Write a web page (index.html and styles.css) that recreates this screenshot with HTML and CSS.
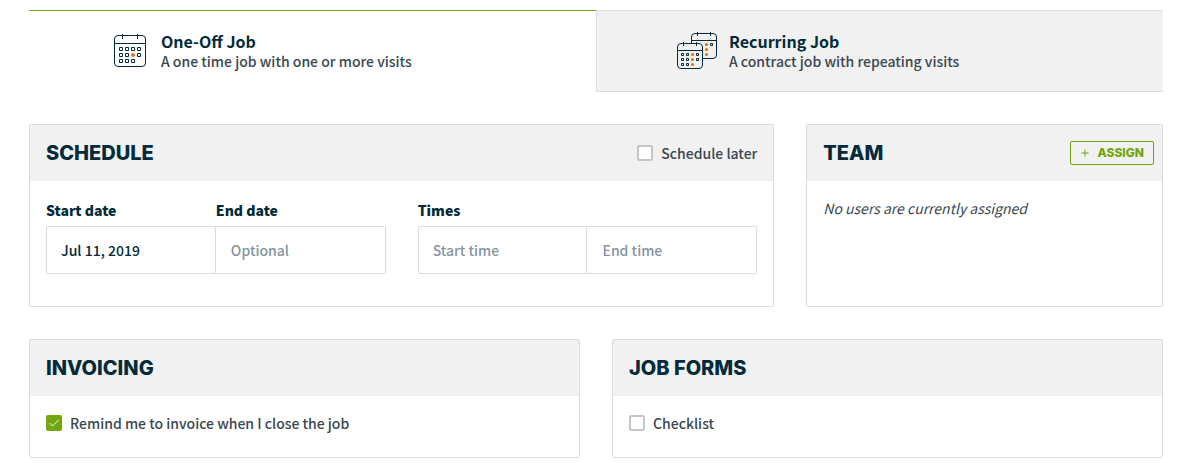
FILE: index.html
```html
<!DOCTYPE html>
<html lang="en">
<head>
    <meta charset="UTF-8">
    <meta name="viewport" content="width=device-width, initial-scale=1.0">
    <title>New Job</title>
    <link rel="stylesheet" href="styles.css">
</head>
<body>
    <div class="tabs" role="tablist">
        <button type="button" class="tab active" role="tab" aria-selected="true">
            <svg class="tab-icon" viewBox="0 0 40 40" aria-hidden="true">
                <rect x="5.5" y="4.5" width="31" height="31" rx="3.5"/>
                <path d="M5 12.5h32M13.5 3v5M28.5 3v5"/>
                <path d="M10.5 16.5h3v3h-3zM16.5 16.5h3v3h-3zM22.5 16.5h3v3h-3zM28.5 16.5h3v3h-3z"/>
                <path d="M10.5 22.5h3v3h-3zM16.5 22.5h3v3h-3zM28.5 22.5h3v3h-3z"/>
                <path d="M10.5 28.5h3v3h-3zM16.5 28.5h3v3h-3zM22.5 28.5h3v3h-3z"/>
                <circle class="dot" cx="24" cy="24" r="2"/>
            </svg>
            <span class="tab-text">
                <strong>One-Off Job</strong>
                <span>A one time job with one or more visits</span>
            </span>
        </button>
        <button type="button" class="tab" role="tab" aria-selected="false">
            <svg class="tab-icon" viewBox="0 0 40 40" aria-hidden="true">
                <rect x="14.5" y="2.5" width="25" height="25" rx="3.5"/>
                <path d="M14 9.5h26M20.5 1v4M33.5 1v4M33.5 12.5h2v2h-2z"/>
                <circle class="dot" cx="29.5" cy="13.5" r="1.6"/>
                <circle class="dot" cx="29.5" cy="18.5" r="1.6"/>
                <circle class="dot" cx="29.5" cy="23.5" r="1.6"/>
                <rect class="front" x="0.5" y="12.5" width="25" height="25" rx="3.5"/>
                <path d="M0 19.5h26M6.5 11v4M19.5 11v4"/>
                <path d="M4.5 22.5h2v2h-2zM9.5 22.5h2v2h-2zM19.5 22.5h2v2h-2z"/>
                <path d="M4.5 27.5h2v2h-2zM9.5 27.5h2v2h-2zM19.5 27.5h2v2h-2z"/>
                <path d="M4.5 32.5h2v2h-2zM9.5 32.5h2v2h-2z"/>
                <circle class="dot" cx="15.5" cy="23.5" r="1.6"/>
                <circle class="dot" cx="15.5" cy="28.5" r="1.6"/>
                <circle class="dot" cx="15.5" cy="33.5" r="1.6"/>
            </svg>
            <span class="tab-text">
                <strong>Recurring Job</strong>
                <span>A contract job with repeating visits</span>
            </span>
        </button>
    </div>

    <form class="grid">
        <section class="card wide">
            <div class="card-header">
                <h2>Schedule</h2>
                <label class="check"><input type="checkbox" name="later"> Schedule later</label>
            </div>
            <div class="card-body fields">
                <div class="group">
                    <label for="startDate">Start date</label>
                    <label for="endDate">End date</label>
                    <input type="text" id="startDate" value="Jul 11, 2019">
                    <input type="text" id="endDate" placeholder="Optional">
                </div>
                <div class="group">
                    <label class="full" for="startTime">Times</label>
                    <input type="text" id="startTime" placeholder="Start time">
                    <input type="text" id="endTime" placeholder="End time" aria-label="End time">
                </div>
            </div>
        </section>

        <section class="card narrow">
            <div class="card-header">
                <h2>Team</h2>
                <button type="button" class="assign">
                    <svg viewBox="0 0 8 8" aria-hidden="true"><path d="M4 0.5v7M0.5 4h7"/></svg>
                    Assign
                </button>
            </div>
            <div class="card-body">
                <p class="empty">No users are currently assigned</p>
            </div>
        </section>

        <section class="card half">
            <div class="card-header">
                <h2>Invoicing</h2>
            </div>
            <div class="card-body">
                <label class="check">
                    <span class="box">
                        <input type="checkbox" name="remind" checked>
                        <svg viewBox="0 0 16 16" aria-hidden="true"><path d="M3.5 8l3 3 6-6"/></svg>
                    </span>
                    Remind me to invoice when I close the job
                </label>
            </div>
        </section>

        <section class="card half">
            <div class="card-header">
                <h2>Job Forms</h2>
            </div>
            <div class="card-body">
                <label class="check"><input type="checkbox" name="checklist"> Checklist</label>
            </div>
        </section>
    </form>
</body>
</html>
```
FILE: styles.css
```css
* {
    box-sizing: border-box;
}
body {
    margin: 0;
    padding: 10px 14px 4px 29px;
    background-color: white;
    color: #3b474f;
    font-family: "Noto Sans CJK SC", "Open Sans", sans-serif;
    font-size: 14px;
    font-weight: 500;
    line-height: 20px;
}
button, input {
    font: inherit;
}

/* job type tabs */
.tabs {
    display: grid;
    grid-template-columns: 1fr 1fr;
    margin-bottom: 32px;
}
.tab {
    display: flex;
    align-items: center;
    gap: 12px;
    min-height: 82px;
    padding: 0 16px 0 80px;
    border: 1px solid #dadcdd;
    border-right: none;
    background-color: #f1f1f1;
    color: #3b474f;
    text-align: left;
    cursor: pointer;
}
.tab.active {
    border-color: #72a60e white white;
    border-left: none;
    background-color: white;
}
.tab-icon {
    flex: none;
    width: 40px;
    height: 40px;
    fill: none;
    stroke: #032b3a;
}
.tab-icon .front {
    fill: #f1f1f1;
}
.tab-icon .dot {
    fill: #e8710a;
    stroke: none;
}
.tab-text strong, .tab-text span {
    display: block;
}
.tab-text strong {
    color: #032b3a;
    font-size: 16px;
}

/* cards */
.grid {
    display: grid;
    grid-template-columns: repeat(12, 1fr);
    gap: 32px;
}
.card {
    border: 1px solid #dadcdd;
    border-radius: 2px;
}
.wide {
    grid-column: span 8;
}
.narrow {
    grid-column: span 4;
}
.half {
    grid-column: span 6;
}
.card-header {
    display: flex;
    align-items: center;
    justify-content: space-between;
    height: 56px;
    padding: 0 16px;
    background-color: #f1f1f1;
}
.narrow .card-header {
    padding-right: 8px;
}
.card-body {
    padding: 17px 16px 24px;
}
h2 {
    margin: 0;
    color: #032b3a;
    font-family: Inter, sans-serif;
    font-size: 20px;
    font-weight: 800;
    text-transform: uppercase;
}
.empty {
    margin: 0;
    font-style: italic;
    font-weight: 400;
}

/* fields */
.fields {
    display: grid;
    grid-template-columns: 1fr 1fr;
    gap: 32px;
    padding: 19px 16px 32px;
}
.group {
    display: grid;
    grid-template-columns: 1fr 1fr;
    row-gap: 6px;
}
.group label {
    color: #032b3a;
    font-weight: 900;
}
.group .full {
    grid-column: span 2;
}
.group input {
    width: 100%;
    height: 48px;
    padding: 0 14px;
    border: 1px solid #dadcdd;
    border-radius: 2px 0 0 2px;
    color: #032b3a;
}
.group input:last-child {
    border-left: none;
    border-radius: 0 2px 2px 0;
    padding-left: 15px;
}
.group input::placeholder {
    color: #8696a0;
}

/* checkboxes */
.check {
    display: flex;
    align-items: center;
    gap: 8px;
}
.check input {
    appearance: none;
    display: block;
    width: 16px;
    height: 16px;
    margin: 0;
    border: 2px solid #c3c5c6;
    border-radius: 2px;
    background-color: white;
}
.check input:checked {
    border-color: #72a60e;
    background-color: #72a60e;
}
.box {
    position: relative;
}
.box svg {
    position: absolute;
    top: 0;
    left: 0;
    width: 16px;
    height: 16px;
    fill: none;
    stroke: white;
    pointer-events: none;
}

.assign {
    display: flex;
    align-items: center;
    justify-content: space-between;
    width: 84px;
    height: 24px;
    padding: 0 9px 0 10px;
    border: 1px solid #72a60e;
    border-radius: 2px;
    background-color: transparent;
    color: #72a60e;
    font-family: Inter, sans-serif;
    font-size: 12px;
    font-weight: 800;
    text-transform: uppercase;
    cursor: pointer;
}
.assign svg {
    width: 8px;
    height: 8px;
    stroke: #72a60e;
}
```
